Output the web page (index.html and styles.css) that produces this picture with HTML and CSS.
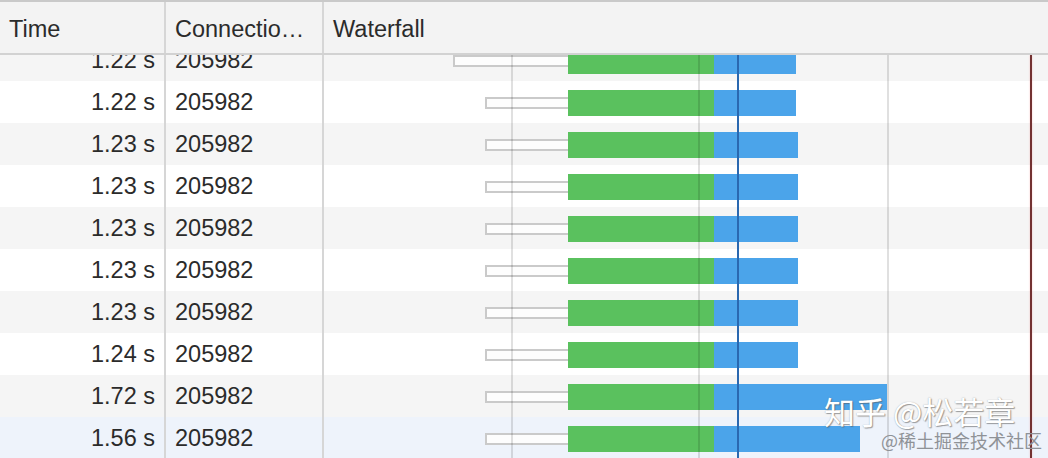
FILE: index.html
```html
<!DOCTYPE html>
<html>
<head>
<meta charset="utf-8">
<link rel="stylesheet" href="styles.css">
</head>
<body>
<div class="panel">
  <div class="header">
    <div class="hcell c-time">Time</div>
    <div class="hcell c-conn">Connectio…</div>
    <div class="hcell c-wf">Waterfall</div>
  </div>
  <div class="body">
    <div class="rows">
      <div class="row alt"><div class="cell c-time num">1.22 s</div><div class="cell c-conn">205982</div><div class="cell c-wf"><span class="whisker" style="margin-left:129px;width:115px"></span><span class="bar green" style="width:146px"></span><span class="bar blue" style="width:82px"></span></div></div>
      <div class="row"><div class="cell c-time num">1.22 s</div><div class="cell c-conn">205982</div><div class="cell c-wf"><span class="whisker" style="margin-left:161px;width:83px"></span><span class="bar green" style="width:146px"></span><span class="bar blue" style="width:82px"></span></div></div>
      <div class="row alt"><div class="cell c-time num">1.23 s</div><div class="cell c-conn">205982</div><div class="cell c-wf"><span class="whisker" style="margin-left:161px;width:83px"></span><span class="bar green" style="width:146px"></span><span class="bar blue" style="width:84px"></span></div></div>
      <div class="row"><div class="cell c-time num">1.23 s</div><div class="cell c-conn">205982</div><div class="cell c-wf"><span class="whisker" style="margin-left:161px;width:83px"></span><span class="bar green" style="width:146px"></span><span class="bar blue" style="width:84px"></span></div></div>
      <div class="row alt"><div class="cell c-time num">1.23 s</div><div class="cell c-conn">205982</div><div class="cell c-wf"><span class="whisker" style="margin-left:161px;width:83px"></span><span class="bar green" style="width:146px"></span><span class="bar blue" style="width:84px"></span></div></div>
      <div class="row"><div class="cell c-time num">1.23 s</div><div class="cell c-conn">205982</div><div class="cell c-wf"><span class="whisker" style="margin-left:161px;width:83px"></span><span class="bar green" style="width:146px"></span><span class="bar blue" style="width:84px"></span></div></div>
      <div class="row alt"><div class="cell c-time num">1.23 s</div><div class="cell c-conn">205982</div><div class="cell c-wf"><span class="whisker" style="margin-left:161px;width:83px"></span><span class="bar green" style="width:146px"></span><span class="bar blue" style="width:84px"></span></div></div>
      <div class="row"><div class="cell c-time num">1.24 s</div><div class="cell c-conn">205982</div><div class="cell c-wf"><span class="whisker" style="margin-left:161px;width:83px"></span><span class="bar green" style="width:146px"></span><span class="bar blue" style="width:84px"></span></div></div>
      <div class="row alt"><div class="cell c-time num">1.72 s</div><div class="cell c-conn">205982</div><div class="cell c-wf"><span class="whisker" style="margin-left:161px;width:83px"></span><span class="bar green" style="width:146px"></span><span class="bar blue" style="width:173px"></span></div></div>
      <div class="row selected"><div class="cell c-time num">1.56 s</div><div class="cell c-conn">205982</div><div class="cell c-wf"><span class="whisker" style="margin-left:161px;width:83px"></span><span class="bar green" style="width:146px"></span><span class="bar blue" style="width:146px"></span></div></div>
    </div>
    <div class="overlay">
      <span class="gridline" style="left:187px"></span>
      <span class="gridline" style="left:374px"></span>
      <span class="gridline" style="left:563px"></span>
      <span class="dcl" style="left:413px"></span>
      <span class="load" style="left:706px"></span>
    </div>
  </div>
  <div class="wm-main">知乎 @松若章</div>
  <div class="wm-sub">@稀土掘金技术社区</div>
</div>
</body>
</html>
```

FILE: styles.css
```css
html, body {
  margin: 0;
  padding: 0;
  background: #ffffff;
  overflow: hidden;
}

.panel {
  position: relative;
  width: 1048px;
  height: 458px;
  overflow: hidden;
  font-family: "Liberation Sans", Arial, "Noto Sans CJK SC", sans-serif;
  font-size: 23.5px;
  color: #2b2b2b;
}

.header {
  display: flex;
  height: 51px;
  background: #f3f3f3;
  border-top: 2px solid #c9c9c9;
  border-bottom: 2px solid #d2d2d2;
  position: relative;
  z-index: 2;
}

.hcell {
  box-sizing: border-box;
  padding: 4px 9px 0 9px;
  line-height: 47px;
  white-space: nowrap;
}

.c-time {
  width: 166px;
  border-right: 2px solid #d6d6d6;
  box-sizing: border-box;
  flex: none;
}

.c-conn {
  width: 158px;
  border-right: 2px solid #d6d6d6;
  box-sizing: border-box;
  flex: none;
}

.c-wf {
  flex: 1;
}

.body {
  position: relative;
  height: 403px;
  overflow: hidden;
}

.rows {
  margin-top: -16px;
}

.row {
  display: flex;
  height: 42px;
  background: #ffffff;
}

.row.alt {
  background: #f5f5f5;
}

.row.selected {
  background: #eef3fb;
}

.cell {
  box-sizing: border-box;
  line-height: 42px;
  padding: 0 9px;
  white-space: nowrap;
}

.cell.num {
  text-align: right;
}

.cell.c-wf {
  display: flex;
  align-items: flex-start;
  padding: 0;
}

.whisker {
  display: block;
  height: 12px;
  margin-top: 16px;
  box-sizing: border-box;
  border: 2px solid #cacaca;
  border-right: none;
  background: #fdfdfd;
  flex: none;
}

.bar {
  display: block;
  height: 26px;
  margin-top: 9px;
  flex: none;
}

.bar.green {
  background: #5ac15e;
}

.bar.blue {
  background: #4ba4ea;
}

.overlay {
  position: absolute;
  left: 324px;
  top: 0;
  right: 0;
  bottom: 0;
  pointer-events: none;
}

.gridline {
  position: absolute;
  top: 0;
  bottom: 0;
  width: 1.5px;
  background: rgba(0, 0, 0, 0.12);
}

.dcl {
  position: absolute;
  top: 0;
  bottom: 0;
  width: 2px;
  background: #2a68b0;
}

.load {
  position: absolute;
  top: 0;
  bottom: 0;
  width: 2px;
  background: #733232;
  box-shadow: 0 0 2px rgba(230, 80, 80, 0.35);
}

.wm-main {
  position: absolute;
  left: 824px;
  top: 396px;
  font-family: "Noto Sans CJK SC", "Liberation Sans", sans-serif;
  font-size: 31px;
  line-height: 30px;
  color: #ffffff;
  text-shadow: 1px 1px 1px rgba(90, 90, 90, 0.55), 0 0 1px rgba(90, 90, 90, 0.5);
  white-space: nowrap;
}

.wm-sub {
  position: absolute;
  right: 6px;
  top: 430px;
  font-family: "Noto Sans CJK SC", "Liberation Sans", sans-serif;
  font-size: 18px;
  line-height: 20px;
  color: #8f9297;
  white-space: nowrap;
}
```
